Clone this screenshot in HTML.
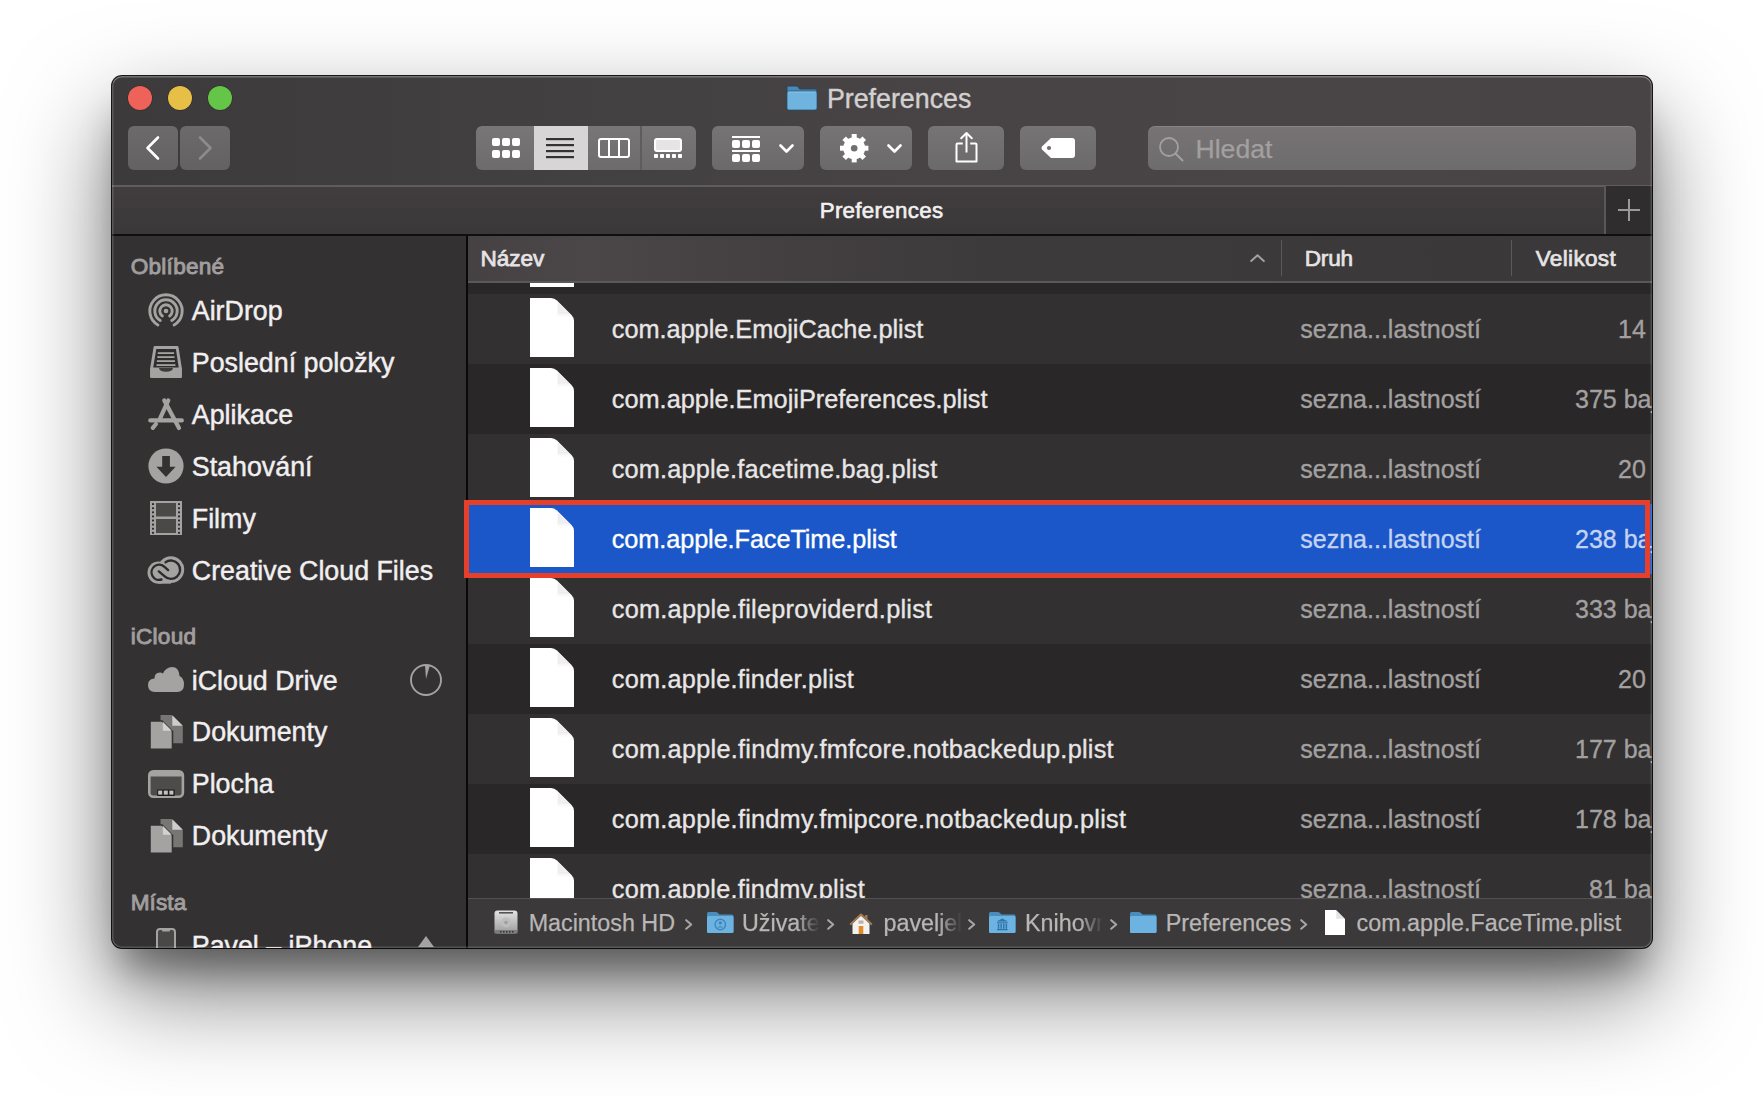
<!DOCTYPE html>
<html><head><meta charset="utf-8"><style>
*{margin:0;padding:0;box-sizing:border-box}
html,body{width:1764px;height:1096px;overflow:hidden;background:#fff}
body{font-family:"Liberation Sans",sans-serif;position:relative}
.a{position:absolute}
.t{position:absolute;white-space:nowrap;line-height:1;-webkit-text-stroke:0.25px currentColor}
#win{position:absolute;left:112px;top:76px;width:1540px;height:872px;border-radius:10px;background:#2a2828;
 box-shadow:0 0 0 1px rgba(0,0,0,0.9),0 44px 100px rgba(0,0,0,0.53),0 30px 36px -10px rgba(0,0,0,0.36);overflow:hidden}
#hl{position:absolute;left:0;top:0;width:1540px;height:872px;border-radius:10px;box-shadow:inset 0 1.5px 0 rgba(255,255,255,0.28),inset 1.5px 0 0 rgba(255,255,255,0.16),inset -1.5px 0 0 rgba(255,255,255,0.16),inset 0 -1.5px 0 rgba(255,255,255,0.16)}
.btn{position:absolute;border-radius:6px;background:#716e6e}
svg{position:absolute;overflow:visible}
</style></head>
<body>
<div id="win">
<div class="a" style="left:-1.00px;top:-1.00px;width:1542.00px;height:110.00px;background:linear-gradient(90deg,#3d3a3b 0%,#434041 30%,#484445 55%,#494546 80%,#484445 100%)"></div>
<div class="a" style="left:-1.00px;top:108.80px;width:1542.00px;height:2.00px;background:#605c5d"></div>
<div class="a" style="left:16px;top:10px;width:24px;height:24px;border-radius:50%;background:#ee6259;box-shadow:0 0 0 0.6px rgba(0,0,0,0.25)"></div>
<div class="a" style="left:56px;top:10px;width:24px;height:24px;border-radius:50%;background:#e7bf46;box-shadow:0 0 0 0.6px rgba(0,0,0,0.25)"></div>
<div class="a" style="left:96px;top:10px;width:24px;height:24px;border-radius:50%;background:#64c548;box-shadow:0 0 0 0.6px rgba(0,0,0,0.25)"></div>
<div class="a" style="left:16.00px;top:50.00px;width:50.00px;height:44.00px;border-radius:6px;background:linear-gradient(180deg,#6d6a6b,#646162)"></div>
<div class="a" style="left:68.00px;top:50.00px;width:50.00px;height:44.00px;border-radius:6px;background:linear-gradient(180deg,#6d6a6b,#646162)"></div>
<svg style="left:33.00px;top:60.00px" width="15" height="24" viewBox="0 0 15 24"><path d="M13 1.5 L2.5 12 L13 22.5" fill="none" stroke="#fff" stroke-width="2.6" stroke-linecap="round" stroke-linejoin="round"/></svg>
<svg style="left:86.00px;top:60.00px" width="15" height="24" viewBox="0 0 15 24"><path d="M2 1.5 L12.5 12 L2 22.5" fill="none" stroke="#8e8b8b" stroke-width="2.6" stroke-linecap="round" stroke-linejoin="round"/></svg>
<div class="a" style="left:364.00px;top:50.00px;width:220.00px;height:44.00px;border-radius:6px;background:linear-gradient(180deg,#797677,#6e6b6c)"></div>
<div class="a" style="left:422.00px;top:50.00px;width:54.00px;height:44.00px;background:#d7d5d5"></div>
<div class="a" style="left:528.00px;top:50.00px;width:1.50px;height:44.00px;background:#5f5c5c"></div>
<svg style="left:380.00px;top:62.00px" width="28" height="20" viewBox="0 0 28 20"><rect x="0" y="0" width="8" height="8" rx="2" fill="#fff"/><rect x="10" y="0" width="8" height="8" rx="2" fill="#fff"/><rect x="20" y="0" width="8" height="8" rx="2" fill="#fff"/><rect x="0" y="12" width="8" height="8" rx="2" fill="#fff"/><rect x="10" y="12" width="8" height="8" rx="2" fill="#fff"/><rect x="20" y="12" width="8" height="8" rx="2" fill="#fff"/></svg>
<svg style="left:434.00px;top:62.00px" width="28" height="21" viewBox="0 0 28 21"><rect x="0" y="0" width="28" height="2.2" fill="#353233"/><rect x="0" y="6" width="28" height="2.2" fill="#353233"/><rect x="0" y="12" width="28" height="2.2" fill="#353233"/><rect x="0" y="18" width="28" height="2.2" fill="#353233"/></svg>
<svg style="left:486.00px;top:62.00px" width="32" height="20" viewBox="0 0 32 20"><rect x="1" y="1" width="30" height="18" rx="2" fill="none" stroke="#fff" stroke-width="2"/><rect x="10" y="1" width="2" height="18" fill="#fff"/><rect x="20" y="1" width="2" height="18" fill="#fff"/></svg>
<svg style="left:542.00px;top:62.00px" width="28" height="20" viewBox="0 0 28 20"><rect x="1" y="1" width="26" height="12" rx="2" fill="#e6e4e4" stroke="#fff" stroke-width="2"/><rect x="0" y="16" width="4" height="4" rx="0.8" fill="#fff"/><rect x="6" y="16" width="4" height="4" rx="0.8" fill="#fff"/><rect x="12" y="16" width="4" height="4" rx="0.8" fill="#fff"/><rect x="18" y="16" width="4" height="4" rx="0.8" fill="#fff"/><rect x="24" y="16" width="4" height="4" rx="0.8" fill="#fff"/></svg>
<div class="a" style="left:600.00px;top:50.00px;width:92.00px;height:44.00px;border-radius:6px;background:linear-gradient(180deg,#777475,#6c696a)"></div>
<svg style="left:620.00px;top:60.00px" width="28" height="26" viewBox="0 0 28 26"><rect x="0" y="0" width="28" height="2" fill="#fff"/><rect x="0" y="14" width="28" height="2" fill="#fff"/><rect x="0" y="4" width="8" height="8" rx="2" fill="#fff"/><rect x="10" y="4" width="8" height="8" rx="2" fill="#fff"/><rect x="20" y="4" width="8" height="8" rx="2" fill="#fff"/><rect x="0" y="18" width="8" height="8" rx="2" fill="#fff"/><rect x="10" y="18" width="8" height="8" rx="2" fill="#fff"/><rect x="20" y="18" width="8" height="8" rx="2" fill="#fff"/></svg>
<svg style="left:667.00px;top:68.00px" width="15" height="9" viewBox="0 0 15 9"><path d="M1.5 1.5 L7.5 7.5 L13.5 1.5" fill="none" stroke="#fff" stroke-width="2.7" stroke-linecap="round" stroke-linejoin="round"/></svg>
<div class="a" style="left:708.00px;top:50.00px;width:92.00px;height:44.00px;border-radius:6px;background:linear-gradient(180deg,#777475,#6c696a)"></div>
<svg style="left:727.70px;top:57.70px" width="28.4" height="28.4" viewBox="0 0 28.4 28.4"><g transform="translate(14.2,14.2)"><rect x="-2.5" y="-14.2" width="5" height="8" transform="rotate(0)" fill="#fff"/><rect x="-2.5" y="-14.2" width="5" height="8" transform="rotate(45)" fill="#fff"/><rect x="-2.5" y="-14.2" width="5" height="8" transform="rotate(90)" fill="#fff"/><rect x="-2.5" y="-14.2" width="5" height="8" transform="rotate(135)" fill="#fff"/><rect x="-2.5" y="-14.2" width="5" height="8" transform="rotate(180)" fill="#fff"/><rect x="-2.5" y="-14.2" width="5" height="8" transform="rotate(225)" fill="#fff"/><rect x="-2.5" y="-14.2" width="5" height="8" transform="rotate(270)" fill="#fff"/><rect x="-2.5" y="-14.2" width="5" height="8" transform="rotate(315)" fill="#fff"/><circle r="11" fill="#fff"/><circle r="3.3" fill="#716e6e"/></g></svg>
<svg style="left:775.00px;top:68.00px" width="15" height="9" viewBox="0 0 15 9"><path d="M1.5 1.5 L7.5 7.5 L13.5 1.5" fill="none" stroke="#fff" stroke-width="2.7" stroke-linecap="round" stroke-linejoin="round"/></svg>
<div class="a" style="left:816.00px;top:50.00px;width:76.00px;height:44.00px;border-radius:6px;background:linear-gradient(180deg,#777475,#6c696a)"></div>
<svg style="left:842.50px;top:54.50px" width="23" height="32" viewBox="0 0 23 32"><path d="M7.8 12.5 H2.5 Q1.5 12.5 1.5 13.5 V30.5 H21.5 V13.5 Q21.5 12.5 20.5 12.5 H15.2" fill="none" stroke="#fff" stroke-width="2" stroke-linejoin="round"/><path d="M11.5 2.2 V21.5" stroke="#fff" stroke-width="2"/><path d="M6.2 7.3 L11.5 2 L16.8 7.3" fill="none" stroke="#fff" stroke-width="2" stroke-linecap="round" stroke-linejoin="round"/></svg>
<div class="a" style="left:908.00px;top:50.00px;width:76.00px;height:44.00px;border-radius:6px;background:linear-gradient(180deg,#777475,#6c696a)"></div>
<svg style="left:929.00px;top:62.00px" width="34" height="20" viewBox="0 0 34 20"><path d="M10 0 H31 Q34 0 34 3 V17 Q34 20 31 20 H10 L1 11.5 Q0 10 1 8.5 Z" fill="#fff"/><circle cx="8" cy="10" r="2.1" fill="#716e6e"/></svg>
<div class="a" style="left:1036.00px;top:50.00px;width:488.00px;height:44.00px;border-radius:7px;background:linear-gradient(180deg,#777374,#6f6c6d);box-shadow:inset 0 1px 0 rgba(255,255,255,0.12)"></div>
<svg style="left:1047.00px;top:61.00px" width="25" height="25" viewBox="0 0 25 25"><circle cx="10" cy="10" r="9" fill="none" stroke="#a3a0a0" stroke-width="1.8"/><path d="M16.5 16.5 L23.5 23.5" stroke="#a3a0a0" stroke-width="2" stroke-linecap="round"/></svg>
<div class="t" style="left:1083.50px;top:59.58px;font-size:26.6px;color:#a3a0a0;">Hledat</div>
<svg style="left:675.00px;top:10.00px" width="30" height="24" viewBox="0 0 30 24"><path d="M1.5 0 H9 Q10.5 0 11.5 1.5 L12.5 3 H28 Q30 3 30 5 V22 Q30 24 28 24 H2 Q0 24 0 22 V1.5 Q0 0 1.5 0 Z" fill="#4a88b5" stroke="#26445a" stroke-width="0.9"/><path d="M0 7 Q0 5 2 5 H28 Q30 5 30 7 V22 Q30 24 28 24 H2 Q0 24 0 22 Z" fill="#6fb3df" stroke="#2c4d66" stroke-width="0.7"/><path d="M1.2 6.2 H28.8" stroke="#8cc6ea" stroke-width="0.8"/></svg>
<div class="t" style="left:714.90px;top:10.11px;font-size:26.8px;color:#d3d0d0;-webkit-text-stroke:0.4px currentColor">Preferences</div>
<div class="a" style="left:-1.00px;top:110.80px;width:1542.00px;height:47.20px;background:linear-gradient(180deg,#413d3e,#3b3839)"></div>
<div class="a" style="left:1493.00px;top:110.00px;width:47.00px;height:48.00px;background:#2f2d2d"></div>
<div class="a" style="left:1492.00px;top:110.00px;width:1.50px;height:48.00px;background:#5a5757"></div>
<svg style="left:1506.00px;top:122.50px" width="22" height="22" viewBox="0 0 22 22"><path d="M11 0 V22 M0 11 H22" stroke="#9c9999" stroke-width="2"/></svg>
<div class="t" style="left:707.70px;top:123.72px;font-size:22.3px;color:#f2f0f0;-webkit-text-stroke:0.6px currentColor;letter-spacing:0.316px">Preferences</div>
<div class="a" style="left:-1.00px;top:158.00px;width:1542.00px;height:2.00px;background:#100e0f"></div>
<div class="a" style="left:-1.00px;top:160.00px;width:355.00px;height:713.00px;background:#343133"></div>
<div class="a" style="left:354.00px;top:160.00px;width:2.00px;height:712.00px;background:#0a0909"></div>
<div class="t" style="left:18.70px;top:180.17px;font-size:22.6px;color:#a19e9e;-webkit-text-stroke:0.9px currentColor;letter-spacing:0.253px">Oblíbené</div>
<div class="t" style="left:18.70px;top:549.87px;font-size:22.6px;color:#a19e9e;-webkit-text-stroke:0.9px currentColor;letter-spacing:0.265px">iCloud</div>
<div class="t" style="left:18.70px;top:816.17px;font-size:22.6px;color:#a19e9e;-webkit-text-stroke:0.9px currentColor;letter-spacing:0.087px">Místa</div>
<div class="t" style="left:79.80px;top:222.21px;font-size:26.8px;color:#f1efef;-webkit-text-stroke:0.45px currentColor">AirDrop</div>
<div class="t" style="left:79.80px;top:274.11px;font-size:26.8px;color:#f1efef;-webkit-text-stroke:0.45px currentColor">Poslední položky</div>
<div class="t" style="left:79.80px;top:326.11px;font-size:26.8px;color:#f1efef;-webkit-text-stroke:0.45px currentColor">Aplikace</div>
<div class="t" style="left:79.80px;top:378.11px;font-size:26.8px;color:#f1efef;-webkit-text-stroke:0.45px currentColor">Stahování</div>
<div class="t" style="left:79.80px;top:430.11px;font-size:26.8px;color:#f1efef;-webkit-text-stroke:0.45px currentColor">Filmy</div>
<div class="t" style="left:79.80px;top:482.11px;font-size:26.8px;color:#f1efef;-webkit-text-stroke:0.45px currentColor">Creative Cloud Files</div>
<div class="t" style="left:79.80px;top:591.51px;font-size:26.8px;color:#f1efef;-webkit-text-stroke:0.45px currentColor">iCloud Drive</div>
<div class="t" style="left:79.80px;top:643.41px;font-size:26.8px;color:#f1efef;-webkit-text-stroke:0.45px currentColor">Dokumenty</div>
<div class="t" style="left:79.80px;top:695.31px;font-size:26.8px;color:#f1efef;-webkit-text-stroke:0.45px currentColor">Plocha</div>
<div class="t" style="left:79.80px;top:747.41px;font-size:26.8px;color:#f1efef;-webkit-text-stroke:0.45px currentColor">Dokumenty</div>
<div class="t" style="left:79.80px;top:857.31px;font-size:26.8px;color:#f1efef;-webkit-text-stroke:0.45px currentColor">Pavel – iPhone</div>
<svg style="left:34.00px;top:214.80px" width="40" height="40" viewBox="0 0 40 40"><g transform="translate(20,20)"><path d="M-8.10 14.03 A16.2 16.2 0 1 1 8.10 14.03" fill="none" stroke="#a5a2a2" stroke-width="2.9" stroke-linecap="round"/><path d="M-5.77 9.60 A11.2 11.2 0 1 1 5.77 9.60" fill="none" stroke="#a5a2a2" stroke-width="2.9" stroke-linecap="round"/><path d="M-3.64 5.02 A6.2 6.2 0 1 1 3.64 5.02" fill="none" stroke="#a5a2a2" stroke-width="2.9" stroke-linecap="round"/><circle r="2.3" fill="#a5a2a2"/></g></svg>
<svg style="left:33.00px;top:264.00px" width="45" height="42" viewBox="0 0 45 42"><path d="M9.8 5.9 H32.3 Q33.3 5.9 33.5 7 L36.8 28 V36.5 Q36.8 38 35.3 38 H6.7 Q5.2 38 5.2 36.5 V28 L8.6 7 Q8.8 5.9 9.8 5.9 Z" fill="#a5a2a2"/><path d="M11.3 9 H30.9 L33.7 27.6 H8.2 Z" fill="#2f2d2d"/><rect x="12.80" y="12.2" width="16.30" height="1.8" fill="#a5a2a2"/><rect x="12.35" y="16.2" width="17.20" height="1.8" fill="#a5a2a2"/><rect x="11.90" y="20.2" width="18.10" height="1.8" fill="#a5a2a2"/><rect x="11.45" y="24.2" width="19.00" height="1.8" fill="#a5a2a2"/><path d="M5.2 28 H14 Q14.5 31.8 21 31.8 Q27.5 31.8 28 28 H36.8 V36.5 Q36.8 38 35.3 38 H6.7 Q5.2 38 5.2 36.5 Z" fill="#a5a2a2"/><path d="M14 28 Q14.5 31.8 21 31.8 Q27.5 31.8 28 28 Z" fill="#3c3a3a"/></svg>
<svg style="left:36.00px;top:322.00px" width="36" height="32" viewBox="0 0 36 32"><g stroke="#a5a2a2" stroke-width="4.2" stroke-linecap="round" fill="none"><path d="M16.3 2.4 L31 30"/><path d="M20.3 2.4 L12.2 20.2"/><path d="M2.3 22.4 H33.8"/><path d="M4.8 29.8 L8 26"/></g></svg>
<svg style="left:36.00px;top:371.80px" width="36" height="36" viewBox="0 0 36 36"><circle cx="18" cy="18" r="17.6" fill="#a5a2a2"/><path d="M14.2 7.9 H21.9 V18.8 H27.6 L18 29 L8.4 18.8 H14.2 Z" fill="#343133"/></svg>
<svg style="left:38.00px;top:425.00px" width="32" height="34" viewBox="0 0 32 34"><rect x="0" y="0" width="32" height="34" fill="#a5a2a2"/><rect x="6" y="2" width="20" height="13.5" fill="#4b4848"/><rect x="6" y="18" width="20" height="14" fill="#4b4848"/><rect x="2.1" y="2.20" width="1.8" height="1.8" fill="#1e1c1c"/><rect x="28.1" y="2.20" width="1.8" height="1.8" fill="#1e1c1c"/><rect x="2.1" y="6.30" width="1.8" height="1.8" fill="#1e1c1c"/><rect x="28.1" y="6.30" width="1.8" height="1.8" fill="#1e1c1c"/><rect x="2.1" y="10.40" width="1.8" height="1.8" fill="#1e1c1c"/><rect x="28.1" y="10.40" width="1.8" height="1.8" fill="#1e1c1c"/><rect x="2.1" y="14.50" width="1.8" height="1.8" fill="#1e1c1c"/><rect x="28.1" y="14.50" width="1.8" height="1.8" fill="#1e1c1c"/><rect x="2.1" y="18.60" width="1.8" height="1.8" fill="#1e1c1c"/><rect x="28.1" y="18.60" width="1.8" height="1.8" fill="#1e1c1c"/><rect x="2.1" y="22.70" width="1.8" height="1.8" fill="#1e1c1c"/><rect x="28.1" y="22.70" width="1.8" height="1.8" fill="#1e1c1c"/><rect x="2.1" y="26.80" width="1.8" height="1.8" fill="#1e1c1c"/><rect x="28.1" y="26.80" width="1.8" height="1.8" fill="#1e1c1c"/><rect x="2.1" y="30.90" width="1.8" height="1.8" fill="#1e1c1c"/><rect x="28.1" y="30.90" width="1.8" height="1.8" fill="#1e1c1c"/></svg>
<svg style="left:32.00px;top:476.00px" width="45" height="36" viewBox="0 0 45 36"><circle cx="14.6" cy="20.6" r="11.1" fill="#a5a2a2"/><circle cx="26.9" cy="17.6" r="13.3" fill="#a5a2a2"/><rect x="14.6" y="19" width="12.3" height="12.7" fill="#a5a2a2"/><g fill="none" stroke="#2d2b2b" stroke-width="2.4" stroke-linecap="round"><path d="M24.1 18.1 L20.5 14.9 A7.6 7.6 0 1 0 17.5 27.5"/><path d="M14.8 19.4 L20.4 24.2 A9.2 9.2 0 1 0 21.6 10.2"/></g></svg>
<svg style="left:36.00px;top:591.00px" width="36" height="25" viewBox="0 0 36 25"><path d="M7 25 Q0 25 0 18 Q0 12 6.5 11.5 Q6.5 5.5 12 5.5 Q13.5 5.5 15 6.5 Q18 0 24 0 Q31 0 31.5 9 Q36 11 36 17.5 Q36 25 29 25 Z" fill="#a5a2a2"/></svg>
<svg style="left:38.00px;top:638.80px" width="33" height="35" viewBox="0 0 33 35"><path d="M10.5 0 H21.5 L32.8 11.3 V28.3 H10.5 Z" fill="#787575"/><path d="M22.3 0.3 L32.8 10.8 H22.3 Z" fill="#cfcccc"/><path d="M0 6 H12 L22.5 16.5 V34.3 H0 Z" fill="#a5a2a2" stroke="#343133" stroke-width="1.6" stroke-linejoin="miter"/><path d="M12.8 6.8 L21.8 15.8 H12.8 Z" fill="#d3d0d0"/></svg>
<svg style="left:38.00px;top:742.80px" width="33" height="35" viewBox="0 0 33 35"><path d="M10.5 0 H21.5 L32.8 11.3 V28.3 H10.5 Z" fill="#787575"/><path d="M22.3 0.3 L32.8 10.8 H22.3 Z" fill="#cfcccc"/><path d="M0 6 H12 L22.5 16.5 V34.3 H0 Z" fill="#a5a2a2" stroke="#343133" stroke-width="1.6" stroke-linejoin="miter"/><path d="M12.8 6.8 L21.8 15.8 H12.8 Z" fill="#d3d0d0"/></svg>
<svg style="left:36.00px;top:694.00px" width="36" height="28" viewBox="0 0 36 28"><rect x="1.3" y="1.3" width="33.6" height="25.4" rx="4" fill="#4e4b4b" stroke="#a5a2a2" stroke-width="2.6"/><rect x="2" y="2" width="32" height="4.5" fill="#a5a2a2"/><rect x="9.2" y="19.5" width="17.5" height="6.5" fill="#1f1d1d"/><rect x="10.20" y="20.6" width="4" height="4" fill="#c4c1c1"/><rect x="15.80" y="20.6" width="4" height="4" fill="#c4c1c1"/><rect x="21.40" y="20.6" width="4" height="4" fill="#c4c1c1"/></svg>
<svg style="left:44.00px;top:852.00px" width="20" height="36" viewBox="0 0 20 36"><rect x="1" y="1" width="18" height="34" rx="3" fill="#4a4747" stroke="#a5a2a2" stroke-width="2"/><rect x="6" y="1" width="8" height="2.5" rx="1" fill="#a5a2a2"/></svg>
<svg style="left:306.00px;top:860.00px" width="16" height="12" viewBox="0 0 16 12"><path d="M8 0 L16 11 H0 Z" fill="#a5a2a2"/></svg>
<svg style="left:298.00px;top:588.00px" width="32" height="32" viewBox="0 0 32 32"><circle cx="16" cy="16" r="15" fill="none" stroke="#a5a2a2" stroke-width="1.9"/><path d="M16 15 L15 1 L19.8 1.5 Z" fill="#a5a2a2"/></svg>
<div class="a" style="left:356.00px;top:160.00px;width:1185.00px;height:45.00px;background:linear-gradient(90deg,#464243 0%,#4b4748 10%,#444041 25%,#3d3a3b 45%,#3b3839 100%)"></div>
<div class="a" style="left:356.00px;top:205.00px;width:1185.00px;height:1.50px;background:#5b5859"></div>
<div class="t" style="left:368.40px;top:172.07px;font-size:22.6px;color:#e6e4e4;-webkit-text-stroke:0.75px currentColor;letter-spacing:-0.053px">Název</div>
<div class="t" style="left:1192.70px;top:172.07px;font-size:22.6px;color:#e6e4e4;-webkit-text-stroke:0.7px currentColor;letter-spacing:-0.196px">Druh</div>
<div class="t" style="left:1423.70px;top:172.07px;font-size:22.6px;color:#e6e4e4;-webkit-text-stroke:0.7px currentColor;letter-spacing:0.316px">Velikost</div>
<div class="a" style="left:1169.00px;top:164.00px;width:1.00px;height:36.00px;background:#5c5959"></div>
<div class="a" style="left:1399.00px;top:164.00px;width:1.00px;height:36.00px;background:#5c5959"></div>
<svg style="left:1138.00px;top:178.00px" width="15" height="8" viewBox="0 0 15 8"><path d="M1.2 7 L7.5 1.2 L13.8 7" fill="none" stroke="#a3a0a0" stroke-width="2" stroke-linecap="round" stroke-linejoin="round"/></svg>
<div class="a" style="left:356px;top:206.5px;width:1185px;height:615.5px;overflow:hidden">
<div class="a" style="left:0.00px;top:0.00px;width:1184.00px;height:12.00px;background:#292727"></div>
<div class="a" style="left:62.00px;top:0.00px;width:44.00px;height:4.00px;background:#fff"></div>
<div class="a" style="left:0.00px;top:11.50px;width:1184.00px;height:70.00px;background:#323030"></div>
<svg style="left:62.00px;top:15.50px" width="44" height="59" viewBox="0 0 44 59"><defs><linearGradient id="dg" x1="0" y1="0" x2="0" y2="1"><stop offset="0" stop-color="#d9d9d9"/><stop offset="1" stop-color="#fff" stop-opacity="0"/></linearGradient></defs><path d="M0 0 H21 Q24.5 0 27 2.5 L41.5 17 Q44 19.5 44 23 V59 H0 Z" fill="#fff"/><path d="M27.6 13.8 H38 L41 17 V21 H27.6 Z" fill="url(#dg)" opacity="0.6"/><path d="M27.6 4.2 V13.8 H37.4 Z" fill="#eeeeee"/></svg>
<div class="t" style="left:143.80px;top:34.68px;font-size:25.3px;color:#e8e6e6;letter-spacing:-0.023px;-webkit-text-stroke:0.35px currentColor">com.apple.EmojiCache.plist</div>
<div class="t" style="left:832.30px;top:34.94px;font-size:25px;color:#a3a0a0;-webkit-text-stroke:0.35px currentColor">sezna...lastností</div>
<div class="t" style="left:1150.00px;top:34.94px;font-size:25px;color:#a3a0a0;-webkit-text-stroke:0.35px currentColor">14 kB</div>
<div class="a" style="left:0.00px;top:81.50px;width:1184.00px;height:70.00px;background:#292727"></div>
<svg style="left:62.00px;top:85.50px" width="44" height="59" viewBox="0 0 44 59"><defs><linearGradient id="dg" x1="0" y1="0" x2="0" y2="1"><stop offset="0" stop-color="#d9d9d9"/><stop offset="1" stop-color="#fff" stop-opacity="0"/></linearGradient></defs><path d="M0 0 H21 Q24.5 0 27 2.5 L41.5 17 Q44 19.5 44 23 V59 H0 Z" fill="#fff"/><path d="M27.6 13.8 H38 L41 17 V21 H27.6 Z" fill="url(#dg)" opacity="0.6"/><path d="M27.6 4.2 V13.8 H37.4 Z" fill="#eeeeee"/></svg>
<div class="t" style="left:143.80px;top:104.68px;font-size:25.3px;color:#e8e6e6;letter-spacing:0.008px;-webkit-text-stroke:0.35px currentColor">com.apple.EmojiPreferences.plist</div>
<div class="t" style="left:832.30px;top:104.94px;font-size:25px;color:#a3a0a0;-webkit-text-stroke:0.35px currentColor">sezna...lastností</div>
<div class="t" style="left:1107.00px;top:104.94px;font-size:25px;color:#a3a0a0;-webkit-text-stroke:0.35px currentColor">375 bajtů</div>
<div class="a" style="left:0.00px;top:151.50px;width:1184.00px;height:70.00px;background:#323030"></div>
<svg style="left:62.00px;top:155.50px" width="44" height="59" viewBox="0 0 44 59"><defs><linearGradient id="dg" x1="0" y1="0" x2="0" y2="1"><stop offset="0" stop-color="#d9d9d9"/><stop offset="1" stop-color="#fff" stop-opacity="0"/></linearGradient></defs><path d="M0 0 H21 Q24.5 0 27 2.5 L41.5 17 Q44 19.5 44 23 V59 H0 Z" fill="#fff"/><path d="M27.6 13.8 H38 L41 17 V21 H27.6 Z" fill="url(#dg)" opacity="0.6"/><path d="M27.6 4.2 V13.8 H37.4 Z" fill="#eeeeee"/></svg>
<div class="t" style="left:143.80px;top:174.68px;font-size:25.3px;color:#e8e6e6;letter-spacing:0.177px;-webkit-text-stroke:0.35px currentColor">com.apple.facetime.bag.plist</div>
<div class="t" style="left:832.30px;top:174.94px;font-size:25px;color:#a3a0a0;-webkit-text-stroke:0.35px currentColor">sezna...lastností</div>
<div class="t" style="left:1150.00px;top:174.94px;font-size:25px;color:#a3a0a0;-webkit-text-stroke:0.35px currentColor">20 kB</div>
<div class="a" style="left:0.00px;top:221.50px;width:1184.00px;height:70.00px;background:#1b57c8"></div>
<svg style="left:62.00px;top:225.50px" width="44" height="59" viewBox="0 0 44 59"><defs><linearGradient id="dg" x1="0" y1="0" x2="0" y2="1"><stop offset="0" stop-color="#d9d9d9"/><stop offset="1" stop-color="#fff" stop-opacity="0"/></linearGradient></defs><path d="M0 0 H21 Q24.5 0 27 2.5 L41.5 17 Q44 19.5 44 23 V59 H0 Z" fill="#fff"/><path d="M27.6 13.8 H38 L41 17 V21 H27.6 Z" fill="url(#dg)" opacity="0.6"/><path d="M27.6 4.2 V13.8 H37.4 Z" fill="#eeeeee"/></svg>
<div class="t" style="left:143.80px;top:244.68px;font-size:25.3px;color:#ffffff;letter-spacing:-0.100px;-webkit-text-stroke:0.35px currentColor">com.apple.FaceTime.plist</div>
<div class="t" style="left:832.30px;top:244.94px;font-size:25px;color:#c4d3f2;-webkit-text-stroke:0.35px currentColor">sezna...lastností</div>
<div class="t" style="left:1107.00px;top:244.94px;font-size:25px;color:#c4d3f2;-webkit-text-stroke:0.35px currentColor">238 bajtů</div>
<div class="a" style="left:0.00px;top:291.50px;width:1184.00px;height:70.00px;background:#323030"></div>
<svg style="left:62.00px;top:295.50px" width="44" height="59" viewBox="0 0 44 59"><defs><linearGradient id="dg" x1="0" y1="0" x2="0" y2="1"><stop offset="0" stop-color="#d9d9d9"/><stop offset="1" stop-color="#fff" stop-opacity="0"/></linearGradient></defs><path d="M0 0 H21 Q24.5 0 27 2.5 L41.5 17 Q44 19.5 44 23 V59 H0 Z" fill="#fff"/><path d="M27.6 13.8 H38 L41 17 V21 H27.6 Z" fill="url(#dg)" opacity="0.6"/><path d="M27.6 4.2 V13.8 H37.4 Z" fill="#eeeeee"/></svg>
<div class="t" style="left:143.80px;top:314.68px;font-size:25.3px;color:#e8e6e6;letter-spacing:0.240px;-webkit-text-stroke:0.35px currentColor">com.apple.fileproviderd.plist</div>
<div class="t" style="left:832.30px;top:314.94px;font-size:25px;color:#a3a0a0;-webkit-text-stroke:0.35px currentColor">sezna...lastností</div>
<div class="t" style="left:1107.00px;top:314.94px;font-size:25px;color:#a3a0a0;-webkit-text-stroke:0.35px currentColor">333 bajtů</div>
<div class="a" style="left:0.00px;top:361.50px;width:1184.00px;height:70.00px;background:#292727"></div>
<svg style="left:62.00px;top:365.50px" width="44" height="59" viewBox="0 0 44 59"><defs><linearGradient id="dg" x1="0" y1="0" x2="0" y2="1"><stop offset="0" stop-color="#d9d9d9"/><stop offset="1" stop-color="#fff" stop-opacity="0"/></linearGradient></defs><path d="M0 0 H21 Q24.5 0 27 2.5 L41.5 17 Q44 19.5 44 23 V59 H0 Z" fill="#fff"/><path d="M27.6 13.8 H38 L41 17 V21 H27.6 Z" fill="url(#dg)" opacity="0.6"/><path d="M27.6 4.2 V13.8 H37.4 Z" fill="#eeeeee"/></svg>
<div class="t" style="left:143.80px;top:384.68px;font-size:25.3px;color:#e8e6e6;letter-spacing:0.211px;-webkit-text-stroke:0.35px currentColor">com.apple.finder.plist</div>
<div class="t" style="left:832.30px;top:384.94px;font-size:25px;color:#a3a0a0;-webkit-text-stroke:0.35px currentColor">sezna...lastností</div>
<div class="t" style="left:1150.00px;top:384.94px;font-size:25px;color:#a3a0a0;-webkit-text-stroke:0.35px currentColor">20 kB</div>
<div class="a" style="left:0.00px;top:431.50px;width:1184.00px;height:70.00px;background:#323030"></div>
<svg style="left:62.00px;top:435.50px" width="44" height="59" viewBox="0 0 44 59"><defs><linearGradient id="dg" x1="0" y1="0" x2="0" y2="1"><stop offset="0" stop-color="#d9d9d9"/><stop offset="1" stop-color="#fff" stop-opacity="0"/></linearGradient></defs><path d="M0 0 H21 Q24.5 0 27 2.5 L41.5 17 Q44 19.5 44 23 V59 H0 Z" fill="#fff"/><path d="M27.6 13.8 H38 L41 17 V21 H27.6 Z" fill="url(#dg)" opacity="0.6"/><path d="M27.6 4.2 V13.8 H37.4 Z" fill="#eeeeee"/></svg>
<div class="t" style="left:143.80px;top:454.68px;font-size:25.3px;color:#e8e6e6;letter-spacing:0.248px;-webkit-text-stroke:0.35px currentColor">com.apple.findmy.fmfcore.notbackedup.plist</div>
<div class="t" style="left:832.30px;top:454.94px;font-size:25px;color:#a3a0a0;-webkit-text-stroke:0.35px currentColor">sezna...lastností</div>
<div class="t" style="left:1107.00px;top:454.94px;font-size:25px;color:#a3a0a0;-webkit-text-stroke:0.35px currentColor">177 bajtů</div>
<div class="a" style="left:0.00px;top:501.50px;width:1184.00px;height:70.00px;background:#292727"></div>
<svg style="left:62.00px;top:505.50px" width="44" height="59" viewBox="0 0 44 59"><defs><linearGradient id="dg" x1="0" y1="0" x2="0" y2="1"><stop offset="0" stop-color="#d9d9d9"/><stop offset="1" stop-color="#fff" stop-opacity="0"/></linearGradient></defs><path d="M0 0 H21 Q24.5 0 27 2.5 L41.5 17 Q44 19.5 44 23 V59 H0 Z" fill="#fff"/><path d="M27.6 13.8 H38 L41 17 V21 H27.6 Z" fill="url(#dg)" opacity="0.6"/><path d="M27.6 4.2 V13.8 H37.4 Z" fill="#eeeeee"/></svg>
<div class="t" style="left:143.80px;top:524.68px;font-size:25.3px;color:#e8e6e6;letter-spacing:0.234px;-webkit-text-stroke:0.35px currentColor">com.apple.findmy.fmipcore.notbackedup.plist</div>
<div class="t" style="left:832.30px;top:524.94px;font-size:25px;color:#a3a0a0;-webkit-text-stroke:0.35px currentColor">sezna...lastností</div>
<div class="t" style="left:1107.00px;top:524.94px;font-size:25px;color:#a3a0a0;-webkit-text-stroke:0.35px currentColor">178 bajtů</div>
<div class="a" style="left:0.00px;top:571.50px;width:1184.00px;height:70.00px;background:#323030"></div>
<svg style="left:62.00px;top:575.50px" width="44" height="59" viewBox="0 0 44 59"><defs><linearGradient id="dg" x1="0" y1="0" x2="0" y2="1"><stop offset="0" stop-color="#d9d9d9"/><stop offset="1" stop-color="#fff" stop-opacity="0"/></linearGradient></defs><path d="M0 0 H21 Q24.5 0 27 2.5 L41.5 17 Q44 19.5 44 23 V59 H0 Z" fill="#fff"/><path d="M27.6 13.8 H38 L41 17 V21 H27.6 Z" fill="url(#dg)" opacity="0.6"/><path d="M27.6 4.2 V13.8 H37.4 Z" fill="#eeeeee"/></svg>
<div class="t" style="left:143.80px;top:594.68px;font-size:25.3px;color:#e8e6e6;letter-spacing:0.214px;-webkit-text-stroke:0.35px currentColor">com.apple.findmy.plist</div>
<div class="t" style="left:832.30px;top:594.94px;font-size:25px;color:#a3a0a0;-webkit-text-stroke:0.35px currentColor">sezna...lastností</div>
<div class="t" style="left:1121.00px;top:594.94px;font-size:25px;color:#a3a0a0;-webkit-text-stroke:0.35px currentColor">81 bajtů</div>
</div>
<div class="a" style="left:352.00px;top:424.00px;width:1186.00px;height:78.00px;border:5px solid #e6402a"></div>
<div class="a" style="left:356.00px;top:822.00px;width:1184.00px;height:50.00px;background:#3b3939"></div>
<div class="a" style="left:356.00px;top:821.80px;width:1185.00px;height:1.50px;background:#545152"></div>
<div class="t" style="left:416.70px;top:836.38px;font-size:23.3px;color:#b9b6b6;">Macintosh HD</div>
<div class="t" style="left:630.00px;top:836.38px;font-size:23.3px;color:#b9b6b6;width:78px;overflow:hidden;-webkit-mask-image:linear-gradient(90deg,#000 70%,transparent)">Uživatelé</div>
<div class="t" style="left:771.50px;top:836.38px;font-size:23.3px;color:#b9b6b6;width:78px;overflow:hidden;-webkit-mask-image:linear-gradient(90deg,#000 70%,transparent)">paveljelinek</div>
<div class="t" style="left:913.00px;top:836.38px;font-size:23.3px;color:#b9b6b6;width:78px;overflow:hidden;-webkit-mask-image:linear-gradient(90deg,#000 70%,transparent)">Knihovna</div>
<div class="t" style="left:1053.80px;top:836.38px;font-size:23.3px;color:#b9b6b6;">Preferences</div>
<div class="t" style="left:1244.60px;top:836.38px;font-size:23.3px;color:#b9b6b6;">com.apple.FaceTime.plist</div>
<svg style="left:573.40px;top:842.60px" width="8" height="11" viewBox="0 0 8 11"><path d="M1.2 1.2 L6.2 5.45 L1.2 9.7" fill="none" stroke="#a9a6a6" stroke-width="2.1" stroke-linecap="round" stroke-linejoin="round"/></svg>
<svg style="left:714.70px;top:842.60px" width="8" height="11" viewBox="0 0 8 11"><path d="M1.2 1.2 L6.2 5.45 L1.2 9.7" fill="none" stroke="#a9a6a6" stroke-width="2.1" stroke-linecap="round" stroke-linejoin="round"/></svg>
<svg style="left:855.90px;top:842.60px" width="8" height="11" viewBox="0 0 8 11"><path d="M1.2 1.2 L6.2 5.45 L1.2 9.7" fill="none" stroke="#a9a6a6" stroke-width="2.1" stroke-linecap="round" stroke-linejoin="round"/></svg>
<svg style="left:997.50px;top:842.60px" width="8" height="11" viewBox="0 0 8 11"><path d="M1.2 1.2 L6.2 5.45 L1.2 9.7" fill="none" stroke="#a9a6a6" stroke-width="2.1" stroke-linecap="round" stroke-linejoin="round"/></svg>
<svg style="left:1188.40px;top:842.60px" width="8" height="11" viewBox="0 0 8 11"><path d="M1.2 1.2 L6.2 5.45 L1.2 9.7" fill="none" stroke="#a9a6a6" stroke-width="2.1" stroke-linecap="round" stroke-linejoin="round"/></svg>
<svg style="left:382.00px;top:834.00px" width="24" height="24" viewBox="0 0 24 24"><defs><linearGradient id="hdg" x1="0" y1="0" x2="0" y2="1"><stop offset="0" stop-color="#e4e4e4"/><stop offset="1" stop-color="#9a9a9a"/></linearGradient></defs><rect x="0.5" y="0.5" width="23" height="23" rx="3" fill="url(#hdg)"/><rect x="5" y="2" width="14" height="1.6" fill="#555"/><circle cx="12" cy="12.5" r="5" fill="#bdbdbd"/><circle cx="12" cy="12.5" r="1.8" fill="#9f9f9f"/><rect x="0.5" y="20" width="23" height="3.5" fill="#7d7d7d"/><g fill="#333"><rect x="6" y="21" width="1.5" height="1.5"/><rect x="9" y="21" width="1.5" height="1.5"/><rect x="12" y="21" width="1.5" height="1.5"/><rect x="15" y="21" width="1.5" height="1.5"/><rect x="18" y="21" width="1.5" height="1.5"/></g></svg>
<svg style="left:594.80px;top:836.30px" width="27" height="21" viewBox="0 0 27 21"><path d="M1.5 0 H9 Q10.5 0 11.5 1.5 L12.5 2.5 H25 Q26.5 2.5 26.5 4 V19.5 Q26.5 21 25 21 H1.5 Q0 21 0 19.5 V1.5 Q0 0 1.5 0 Z" fill="#4a8dbd"/><path d="M0 5.5 Q0 4 1.5 4 H25 Q26.5 4 26.5 5.5 V19.5 Q26.5 21 25 21 H1.5 Q0 21 0 19.5 Z" fill="#6db3e1"/><circle cx="13.3" cy="12.5" r="5.2" fill="none" stroke="#3f86bd" stroke-width="1.4"/><circle cx="13.3" cy="10.9" r="1.7" fill="#3f86bd"/><path d="M10.3 15.6 Q13.3 12.2 16.3 15.6" fill="#3f86bd"/></svg>
<svg style="left:876.60px;top:836.20px" width="27" height="21" viewBox="0 0 27 21"><path d="M1.5 0 H9 Q10.5 0 11.5 1.5 L12.5 2.5 H25 Q26.5 2.5 26.5 4 V19.5 Q26.5 21 25 21 H1.5 Q0 21 0 19.5 V1.5 Q0 0 1.5 0 Z" fill="#4a8dbd"/><path d="M0 5.5 Q0 4 1.5 4 H25 Q26.5 4 26.5 5.5 V19.5 Q26.5 21 25 21 H1.5 Q0 21 0 19.5 Z" fill="#6db3e1"/><path d="M7.5 9.5 L13.3 6.5 L19 9.5 Z M8 10.3 H18.6 V11.3 H8 Z M8 17 H18.6 V18.3 H8 Z" fill="#2f75ab"/><rect x="8.8" y="11.6" width="1.5" height="5.2" fill="#2f75ab"/><rect x="11.4" y="11.6" width="1.5" height="5.2" fill="#2f75ab"/><rect x="14.0" y="11.6" width="1.5" height="5.2" fill="#2f75ab"/><rect x="16.6" y="11.6" width="1.5" height="5.2" fill="#2f75ab"/></svg>
<svg style="left:1018.00px;top:836.20px" width="27" height="21" viewBox="0 0 27 21"><path d="M1.5 0 H9 Q10.5 0 11.5 1.5 L12.5 2.5 H25 Q26.5 2.5 26.5 4 V19.5 Q26.5 21 25 21 H1.5 Q0 21 0 19.5 V1.5 Q0 0 1.5 0 Z" fill="#4a8dbd"/><path d="M0 5.5 Q0 4 1.5 4 H25 Q26.5 4 26.5 5.5 V19.5 Q26.5 21 25 21 H1.5 Q0 21 0 19.5 Z" fill="#6db3e1"/></svg>
<svg style="left:738.00px;top:837.00px" width="22" height="21" viewBox="0 0 22 21"><path d="M2.5 10 L11 2.5 L19.5 10 V21 H2.5 Z" fill="#f4f2ef"/><path d="M0.8 11 L11 1.5 L21.2 11" fill="none" stroke="#9c7a55" stroke-width="2.2" stroke-linecap="round" stroke-linejoin="round"/><rect x="15" y="2" width="2.5" height="5" fill="#9c7a55"/><rect x="8.7" y="13" width="4.6" height="8" fill="#e08a2c"/><rect x="8.5" y="7.5" width="5" height="3.2" fill="#b9b3ad"/></svg>
<svg style="left:1213.00px;top:834.00px" width="20" height="25" viewBox="0 0 20 25"><path d="M0 0 H11 L20 9 V25 H0 Z" fill="#fff"/><path d="M11.3 0.5 V8.7 H19.5 Z" fill="#e4e4e4"/></svg>
<div id="hl"></div>
</div>
</body></html>
